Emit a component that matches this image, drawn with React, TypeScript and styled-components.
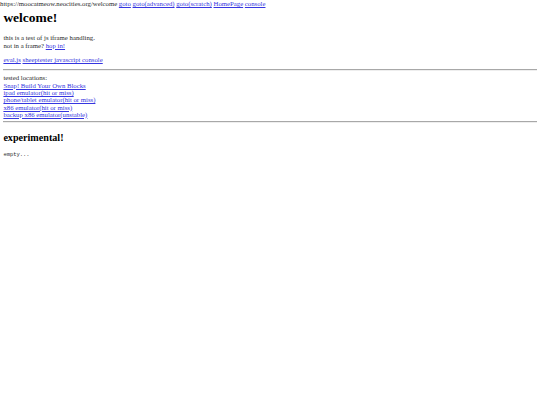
import React from "react";
import styled, { createGlobalStyle } from "styled-components";

const S = 540 / 1280;
const px = (n: number) => `${(n * S).toFixed(2)}px`;

const Global = createGlobalStyle`
    html, body {
        margin: 0;
        padding: 0;
        background: #fff;
    }
    body {
        font-family: "Liberation Serif", "Times New Roman", serif;
        font-size: ${px(16)};
        line-height: 1.11;
        color: #2a2a2a;
    }
`;

const TopBar = styled.div`
    white-space: nowrap;
`;

const Page = styled.div`
    padding: 0 ${px(8)};
`;

const Link = styled.a`
    color: #3535e0;
    text-decoration: underline;
    cursor: pointer;
`;

const Title = styled.h1`
    font-size: ${px(32)};
    font-weight: bold;
    color: #000;
    margin: ${px(6)} 0 ${px(21)};
    line-height: 1.15;
`;

const SubTitle = styled.h2`
    font-size: ${px(24)};
    font-weight: bold;
    color: #000;
    margin: ${px(19.92)} 0;
    line-height: 1.15;
`;

const Para = styled.p`
    margin: ${px(16)} 0 ${px(13)};
`;

const Rule = styled.hr`
    border: none;
    border-top: 1px solid #a8a8a8;
    border-bottom: 1px solid #eee;
    margin: ${px(8)} 0;
`;

const Block = styled.div`
    line-height: 1.08;
`;

const Mono = styled.pre`
    font-family: "Liberation Mono", "Courier New", monospace;
    font-size: ${px(13)};
    margin: ${px(13)} 0;
`;

const App: React.FC = () => {
    return (
        <>
            <Global />
            <TopBar>
                https://moocatmeow.neocities.org/welcome <Link>goto</Link> <Link>goto(advanced)</Link>{" "}
                <Link>goto(scratch)</Link> <Link>HomePage</Link> <Link>console</Link>
            </TopBar>
            <Page>
                <Title>welcome!</Title>
                <Para>
                    this is a test of js iframe handling.
                    <br />
                    not in a frame? <Link>hop in!</Link>
                </Para>
                <Para>
                    <Link>eval.js</Link> <Link>sheeptester javascript console</Link>
                </Para>
                <Rule />
                <Block>
                    tested locations:
                    <br />
                    <Link>Snap! Build Your Own Blocks</Link>
                    <br />
                    <Link>ipad emulator(hit or miss)</Link>
                    <br />
                    <Link>phone/tablet emulator(hit or miss)</Link>
                    <br />
                    <Link>x86 emulator(hit or miss)</Link>
                    <br />
                    <Link>backup x86 emulator(unstable)</Link>
                </Block>
                <Rule />
                <SubTitle>experimental!</SubTitle>
                <Mono>empty...</Mono>
            </Page>
        </>
    );
};

export default App;
